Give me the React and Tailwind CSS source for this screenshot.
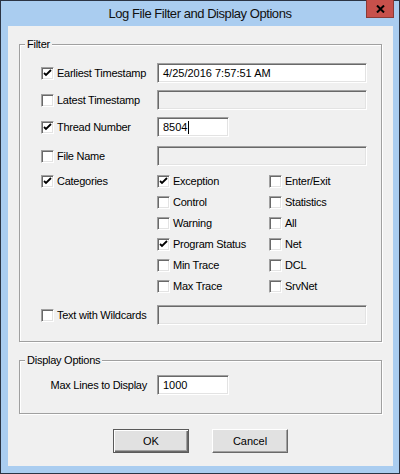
import React from 'react';

const sunken =
  'border border-t-[#a0a0a0] border-l-[#a0a0a0] border-r-white border-b-white shadow-[inset_1px_1px_0_#696969,inset_-1px_-1px_0_#e3e3e3]';

const CheckBox = ({ checked }) => (
  <span className={`relative block w-[13px] h-[13px] shrink-0 bg-white ${sunken}`}>
    {checked && (
      <svg className="absolute left-0 top-0" width="11" height="11" viewBox="0 0 11 11">
        <path d="M2 5 L4 7 L9 2" fill="none" stroke="#000" strokeWidth="1.8" />
      </svg>
    )}
  </span>
);

const Option = ({ label, checked }) => (
  <div className="flex items-center gap-[3px] h-[21px] whitespace-nowrap">
    <CheckBox checked={checked} />
    <span className="tracking-[-0.25px]">{label}</span>
  </div>
);

const TextBox = ({ width, value, disabled, caret }) => (
  <div
    className={`flex items-center h-[20px] pl-[5px] ${sunken} ${disabled ? 'bg-[#f0f0f0]' : 'bg-white'}`}
    style={{ width }}
  >
    {value}
    {caret && <span className="ml-px w-px h-[13px] bg-black" />}
  </div>
);

const FieldRow = ({ label, checked, className = '', children }) => (
  <div className={`flex items-center h-[20px] ${className}`}>
    <div className="w-[137px] pl-[21px] flex items-center gap-[3px] whitespace-nowrap">
      <CheckBox checked={checked} />
      <span className="tracking-[-0.25px]">{label}</span>
    </div>
    {children}
  </div>
);

const GroupBox = ({ title, className = '', children }) => (
  <div
    className={`relative w-[363px] ml-[11px] border border-[#a0a0a0] shadow-[inset_1px_1px_0_#fff,1px_1px_0_#fff] ${className}`}
  >
    <span className="absolute -top-[7px] left-[5px] px-[2px] bg-[#f0f0f0] leading-[13px] tracking-[-0.25px]">{title}</span>
    {children}
  </div>
);

export default function App() {
  return (
    <div className="w-[400px] h-[474px] flex flex-col bg-[#aacdf0] border border-[#2b3444] font-['Liberation_Sans',Arial,sans-serif] text-[11px] text-black">
      {/* Title bar */}
      <div className="relative h-[25px] shrink-0 flex items-center justify-center">
        <span className="text-[13px] tracking-[-0.45px] text-[#111]">Log File Filter and Display Options</span>
        <button className="absolute -top-px right-[5px] w-[28px] h-[18px] flex items-center justify-center bg-[#c7504b] border border-[#8a3a36] border-t-0">
          <svg width="9" height="8" viewBox="0 0 9 8">
            <path d="M1 0.5 L8 7.5 M8 0.5 L1 7.5" stroke="#000" strokeWidth="2" />
          </svg>
        </button>
      </div>

      {/* Dialog body */}
      <div className="ml-[7px] mr-[6px] mb-[7px] flex-1 bg-[#f0f0f0] flex flex-col">
        <GroupBox title="Filter" className="mt-[18px] pt-[18px] pb-[16px]">
          <FieldRow label="Earliest Timestamp" checked>
            <TextBox width={210} value="4/25/2016 7:57:51 AM" />
          </FieldRow>
          <FieldRow label="Latest Timestamp" className="mt-[7px]">
            <TextBox width={210} disabled />
          </FieldRow>
          <FieldRow label="Thread Number" checked className="mt-[7px]">
            <TextBox width={72} value="8504" caret />
          </FieldRow>
          <FieldRow label="File Name" className="mt-[9px]">
            <TextBox width={210} disabled />
          </FieldRow>

          {/* Categories */}
          <div className="flex mt-[5px]">
            <div className="w-[137px] pl-[21px]">
              <Option label="Categories" checked />
            </div>
            <div className="w-[112px] flex flex-col">
              <Option label="Exception" checked />
              <Option label="Control" />
              <Option label="Warning" />
              <Option label="Program Status" checked />
              <Option label="Min Trace" />
              <Option label="Max Trace" />
            </div>
            <div className="flex flex-col">
              <Option label="Enter/Exit" />
              <Option label="Statistics" />
              <Option label="All" />
              <Option label="Net" />
              <Option label="DCL" />
              <Option label="SrvNet" />
            </div>
          </div>

          <FieldRow label="Text with Wildcards" className="mt-[8px]">
            <TextBox width={210} disabled />
          </FieldRow>
        </GroupBox>

        <GroupBox title="Display Options" className="mt-[18px] pt-[14px] pb-[18px]">
          <div className="flex items-center h-[20px]">
            <div className="w-[137px] pr-[10px] text-right whitespace-nowrap tracking-[-0.25px]">Max Lines to Display</div>
            <TextBox width={72} value="1000" />
          </div>
        </GroupBox>

        {/* Buttons */}
        <div className="mt-[15px] flex justify-center gap-[23px]">
          <button className="w-[76px] h-[24px] bg-[#e1e1e1] border border-[#5a5a5a] shadow-[inset_1px_1px_0_#fff,inset_-1px_-1px_0_#696969,inset_-2px_-2px_0_#a0a0a0]">
            OK
          </button>
          <button className="w-[76px] h-[24px] bg-[#e1e1e1] border border-t-white border-l-white border-r-[#696969] border-b-[#696969] shadow-[inset_-1px_-1px_0_#a0a0a0]">
            Cancel
          </button>
        </div>
      </div>
    </div>
  );
}
